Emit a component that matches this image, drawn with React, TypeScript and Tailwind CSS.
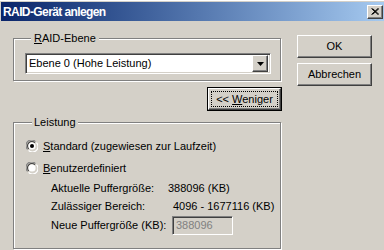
function RaisedButton({
  children,
  isDefault = false,
  className = '',
}: {
  children: React.ReactNode
  isDefault?: boolean
  className?: string
}) {
  if (isDefault) {
    return (
      <div className={`border border-black ${className}`}>
        <div className="w-full h-full flex items-center justify-center border border-t-white border-l-white border-r-[#404040] border-b-[#404040] shadow-[inset_-1px_-1px_0_#808080] p-[2px]">
          <div className="w-full h-full flex items-center justify-center border border-dotted border-black">
            {children}
          </div>
        </div>
      </div>
    )
  }
  return (
    <div
      className={`flex items-center justify-center border border-t-white border-l-white border-r-[#404040] border-b-[#404040] shadow-[inset_-1px_-1px_0_#808080] ${className}`}
    >
      {children}
    </div>
  )
}

function Radio({ checked }: { checked: boolean }) {
  return (
    <svg width="12" height="12" viewBox="0 0 12 12" className="shrink-0">
      <path d="M1.6 9.4 A5 5 0 0 1 9.4 1.6" stroke="#808080" fill="none" strokeWidth="1.2" />
      <path d="M2.8 8.8 A4 4 0 0 1 8.8 2.8" stroke="#404040" fill="none" strokeWidth="1.2" />
      <path d="M10.4 2.6 A5.5 5.5 0 0 1 2.6 10.4" stroke="#ffffff" fill="none" strokeWidth="1.2" />
      <path d="M9.2 3.4 A4.3 4.3 0 0 1 3.4 9.2" stroke="#d4d0c8" fill="none" strokeWidth="1.2" />
      <circle cx="6" cy="6" r="3.6" fill="#ffffff" />
      {checked && <circle cx="6" cy="6" r="2" fill="#000000" />}
    </svg>
  )
}

function Sunken({ className = '', children }: { className?: string; children?: React.ReactNode }) {
  return (
    <div
      className={`border border-t-[#808080] border-l-[#808080] border-r-white border-b-white shadow-[inset_1px_1px_0_#404040,inset_-1px_-1px_0_#d4d0c8] ${className}`}
    >
      {children}
    </div>
  )
}

export default function App() {
  return (
    <div className="w-[384px] h-[250px] overflow-hidden bg-[#d4d0c8] text-[11px] leading-[13px] text-black font-['Liberation_Sans',Arial,sans-serif] border-t border-t-white">
      <div className="pt-[1px] pl-[1px]">
        {/* title bar */}
        <div className="h-[19px] flex items-center bg-gradient-to-r from-[#0a246a] to-[#a6caf0] pl-[2px] pr-[1px]">
          <span className="text-white font-bold text-[12px] leading-[14px] tracking-[-0.6px]">RAID-Gerät anlegen</span>
          <RaisedButton className="ml-auto w-[16px] h-[14px] bg-[#d4d0c8]">
            <svg width="8" height="7" viewBox="0 0 8 7">
              <path d="M0.5 0.5 L7 6.5 M1.5 0.5 L8 6.5 M7 0.5 L0.5 6.5 M8 0.5 L1.5 6.5" stroke="#000" strokeWidth="1" />
            </svg>
          </RaisedButton>
        </div>
      </div>

      <div className="flex pl-[13px]">
        {/* left column */}
        <div className="w-[269px] flex flex-col pt-[11px]">
          <fieldset className="w-[268px] border border-[#808080] shadow-[inset_1px_1px_0_#fff,1px_1px_0_#fff] pl-[11px] pr-[9px] pt-[8px] pb-[6px]">
            <legend className="ml-[6px] px-[3px] bg-[#d4d0c8]">
              <span className="underline">R</span>AID-Ebene
            </legend>
            <Sunken className="h-[21px] w-[246px] bg-white flex items-center pl-[3px] pr-[2px]">
              <span>Ebene 0 (Hohe Leistung)</span>
              <RaisedButton className="ml-auto w-[16px] h-[17px] bg-[#d4d0c8]">
                <svg width="7" height="4" viewBox="0 0 7 4">
                  <path d="M0 0 H7 L3.5 4 Z" fill="#000" />
                </svg>
              </RaisedButton>
            </Sunken>
          </fieldset>

          <RaisedButton isDefault className="self-end mt-[6px] w-[75px] h-[24px]">
            <span>
              &lt;&lt; <span className="underline">W</span>eniger
            </span>
          </RaisedButton>

          <fieldset className="mt-[5px] w-[268px] border border-[#808080] shadow-[inset_1px_1px_0_#fff,1px_1px_0_#fff] pl-[12px] pt-[9px] pb-[13px]">
            <legend className="ml-[6px] px-[2px] bg-[#d4d0c8]">Leistung</legend>
            <div className="flex items-center gap-[5px] h-[16px]">
              <Radio checked />
              <span className="whitespace-nowrap">
                <span className="underline">S</span>tandard (zugewiesen zur Laufzeit)
              </span>
            </div>
            <div className="flex items-center gap-[5px] h-[16px] mt-[6px]">
              <Radio checked={false} />
              <span>
                <span className="underline">B</span>enutzerdefiniert
              </span>
            </div>
            <div className="pl-[25px] flex flex-col">
              <div className="flex items-center h-[14px] mt-[5px]">
                <span className="w-[117px] shrink-0 whitespace-nowrap">Aktuelle Puffergröße:</span>
                <span className="whitespace-nowrap">388096 (KB)</span>
              </div>
              <div className="flex items-center h-[14px] mt-[4px]">
                <span className="w-[122px] shrink-0 whitespace-nowrap">Zulässiger Bereich:</span>
                <span className="whitespace-nowrap">4096 - 1677116 (KB)</span>
              </div>
              <div className="flex items-center h-[19px] mt-[3px]">
                <span className="w-[121px] shrink-0 whitespace-nowrap">Neue Puffergröße (KB):</span>
                <Sunken className="w-[61px] h-[19px] shrink-0 bg-[#d4d0c8] flex items-center pl-[3px] text-[#808080]">
                  388096
                </Sunken>
              </div>
            </div>
          </fieldset>
        </div>

        {/* right column */}
        <div className="ml-[15px] pt-[14px] flex flex-col gap-[5px]">
          <RaisedButton className="w-[75px] h-[23px]">OK</RaisedButton>
          <RaisedButton className="w-[75px] h-[23px]">Abbrechen</RaisedButton>
        </div>
      </div>
    </div>
  )
}
